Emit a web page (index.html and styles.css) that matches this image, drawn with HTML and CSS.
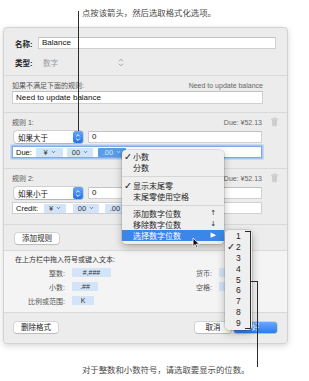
FILE: index.html
```html
<!DOCTYPE html>
<html lang="zh">
<head>
  <meta charset="UTF-8">
  <title>Number format</title>
  <link rel="stylesheet" href="styles.css">
</head>
<body>
  <div class="page">
    <p class="note note-top">点按该箭头，然后选取格式化选项。</p>

    <div class="dialog">
      <div class="sec sec-name">
        <div class="frow">
          <span class="flabel">名称:</span>
          <span class="field field-name">Balance</span>
        </div>
        <div class="frow">
          <span class="flabel">类型:</span>
          <span class="typepop">数字
            <svg width="6" height="9" viewBox="0 0 6 9"><path d="M1 3.2L3 1.2L5 3.2M1 5.8L3 7.8L5 5.8" fill="none" stroke="#9a9a9a" stroke-width=".9"/></svg>
          </span>
        </div>
      </div>

      <div class="sec sec-fail">
        <div class="shead">
          <span>如果不满足下面的规则:</span>
          <span class="preview">Need to update balance</span>
        </div>
        <div class="field field-fail">Need to update balance</div>
      </div>

      <div class="sec rule">
        <div class="shead">
          <span>规则 1:</span>
          <span class="preview">Due: ¥52.13</span>
          <svg class="trash" width="9" height="10" viewBox="0 0 9 10"><path d="M1 2.2h7M3.3 2.2V1.1h2.4v1.1" fill="none" stroke="#c4c4c4" stroke-width=".9"/><path d="M1.8 3l.6 6.2h4.2L7.2 3z" fill="#cdcdcd"/></svg>
        </div>
        <div class="rrow">
          <span class="popup">如果大于
            <span class="stepper"><svg width="6" height="9" viewBox="0 0 6 9"><path d="M1.2 3.4L3 1.6L4.8 3.4M1.2 5.6L3 7.4L4.8 5.6" fill="none" stroke="#fff" stroke-width="1"/></svg></span>
          </span>
          <span class="field val">0</span>
        </div>
        <div class="fmt focus">
          <span class="fname">Due:</span>
          <span class="tok tok-cur">¥<svg width="5" height="4" viewBox="0 0 5 4"><path d="M1 1.2L2.5 2.7L4 1.2" fill="none" stroke="#555" stroke-width=".8"/></svg></span>
          <span class="tok tok-int">00<svg width="5" height="4" viewBox="0 0 5 4"><path d="M1 1.2L2.5 2.7L4 1.2" fill="none" stroke="#555" stroke-width=".8"/></svg></span>
          <span class="tok tok-dec sel">.00<svg width="5" height="4" viewBox="0 0 5 4"><path d="M1 1.2L2.5 2.7L4 1.2" fill="none" stroke="#dbe8fb" stroke-width=".8"/></svg></span>
        </div>
      </div>

      <div class="sec rule">
        <div class="shead">
          <span>规则 2:</span>
          <span class="preview">Due: ¥52.13</span>
          <svg class="trash" width="9" height="10" viewBox="0 0 9 10"><path d="M1 2.2h7M3.3 2.2V1.1h2.4v1.1" fill="none" stroke="#c4c4c4" stroke-width=".9"/><path d="M1.8 3l.6 6.2h4.2L7.2 3z" fill="#cdcdcd"/></svg>
        </div>
        <div class="rrow">
          <span class="popup">如果小于
            <span class="stepper"><svg width="6" height="9" viewBox="0 0 6 9"><path d="M1.2 3.4L3 1.6L4.8 3.4M1.2 5.6L3 7.4L4.8 5.6" fill="none" stroke="#fff" stroke-width="1"/></svg></span>
          </span>
          <span class="field val">0</span>
        </div>
        <div class="fmt">
          <span class="fname">Credit:</span>
          <span class="tok tok-cur">¥<svg width="5" height="4" viewBox="0 0 5 4"><path d="M1 1.2L2.5 2.7L4 1.2" fill="none" stroke="#555" stroke-width=".8"/></svg></span>
          <span class="tok tok-int">00<svg width="5" height="4" viewBox="0 0 5 4"><path d="M1 1.2L2.5 2.7L4 1.2" fill="none" stroke="#555" stroke-width=".8"/></svg></span>
          <span class="tok tok-dec">.00<svg width="5" height="4" viewBox="0 0 5 4"><path d="M1 1.2L2.5 2.7L4 1.2" fill="none" stroke="#555" stroke-width=".8"/></svg></span>
        </div>
      </div>

      <div class="sec sec-add">
        <span class="btn btn-add">添加规则</span>
      </div>

      <div class="sec sec-sym">
        <div class="symhead">在上方栏中拖入符号或键入文本:</div>
        <div class="symgrid">
          <span class="slabel">整数:</span><span><span class="stok stok-int">#,###</span></span>
          <span class="slabel">货币:</span><span><span class="stok stok-r">¥</span></span>
          <span class="slabel">小数:</span><span><span class="stok stok-dec">.##</span></span>
          <span class="slabel">空格:</span><span><span class="stok stok-r">␣</span></span>
          <span class="slabel">比例或范围:</span><span><span class="stok stok-k">K</span></span>
          <span></span><span></span>
        </div>
      </div>

      <div class="sec sec-foot">
        <span class="btn btn-del">删除格式</span>
        <span class="spacer"></span>
        <span class="btn btn-cancel">取消</span>
        <span class="btn btn-ok">好</span>
      </div>
    </div>

    <p class="note note-bottom">对于整数和小数符号，请选取要显示的位数。</p>

    <div class="menu">
      <div class="mi"><span class="chk">✓</span>小数</div>
      <div class="mi">分数</div>
      <div class="msep"></div>
      <div class="mi"><span class="chk">✓</span>显示末尾零</div>
      <div class="mi">末尾零使用空格</div>
      <div class="msep msep-s"></div>
      <div class="mi">添加数字位数<span class="key">↑</span></div>
      <div class="mi">移除数字位数<span class="key">↓</span></div>
      <div class="mi hl">选择数字位数<span class="key">▶</span></div>
    </div>

    <div class="submenu">
      <div class="si">1</div>
      <div class="si"><span class="chk">✓</span>2</div>
      <div class="si">3</div>
      <div class="si">4</div>
      <div class="si">5</div>
      <div class="si">6</div>
      <div class="si">7</div>
      <div class="si">8</div>
      <div class="si">9</div>
    </div>

    <svg class="cursor" width="8" height="12" viewBox="0 0 8 12"><path d="M1 1v8.5l2.1-2 1.4 3.2 1.3-.6-1.4-3.1H7.3z" fill="#111" stroke="#fff" stroke-width=".8"/></svg>

    <div class="ln ln-top"></div>
    <div class="ln ln-brk"></div>
    <div class="ln ln-brk-t"></div>
    <div class="ln ln-brk-b"></div>
    <div class="ln ln-link"></div>
    <div class="ln ln-down"></div>
  </div>
</body>
</html>
```

FILE: styles.css
```css
* {
  box-sizing: border-box;
}

body {
  margin: 0;
  background: #fff;
  font-family: "Liberation Sans", "Noto Sans CJK SC", sans-serif;
  font-size: 7px;
  color: #2a2a2a;
}

.page {
  position: relative;
  width: 309px;
  height: 381px;
  overflow: hidden;
}

.note {
  margin: 0;
  font-family: "Noto Sans CJK SC", sans-serif;
  font-size: 8.4px;
  line-height: 12px;
  color: #4a4a4a;
  white-space: nowrap;
}

.note-top {
  height: 27px;
  padding: 6px 0 0 82px;
}

.note-bottom {
  margin-top: 19px;
  padding-left: 82px;
}

/* dialog */
.dialog {
  margin-left: 3px;
  width: 285px;
  background: #ececec;
  border: 1px solid #d2d2d2;
  border-radius: 4px;
  box-shadow: 0 2px 6px rgba(0, 0, 0, .16);
  overflow: hidden;
}

.sec {
  border-bottom: 1px solid #d9d9d9;
}

.sec-name {
  height: 48px;
  padding: 9px 11px 0 11px;
}

.frow {
  display: flex;
  align-items: center;
  height: 12px;
  margin-bottom: 7px;
}

.flabel {
  width: 23px;
  font-weight: bold;
  font-size: 7.5px;
  color: #222;
}

.field {
  display: block;
  height: 12px;
  padding-left: 3px;
  background: #fff;
  border: 1px solid #d0d0d0;
  border-top-color: #c2c2c2;
  font-size: 8px;
  color: #111;
  line-height: 10px;
}

.field-name {
  flex: 1;
}

.typepop {
  display: flex;
  align-items: center;
  justify-content: space-between;
  width: 88px;
  padding: 0 2px 0 5px;
  color: #9a9a9a;
  font-size: 7.5px;
}

.sec-fail {
  height: 37px;
  padding: 4px 24px 0 8px;
}

.shead {
  display: flex;
  align-items: center;
  height: 10px;
  color: #555;
  font-size: 7px;
}

.preview {
  margin-left: auto;
  color: #666;
  font-size: 7px;
}

.field-fail {
  margin-top: 1px;
  height: 13px;
  line-height: 11px;
}

.rule {
  height: 56px;
  padding: 4px 8px 0 8px;
}

.trash {
  margin-left: 8px;
}

.rrow {
  display: flex;
  align-items: center;
  margin: 4px 17px 0 2px;
  height: 12px;
}

.popup {
  display: flex;
  align-items: center;
  width: 69px;
  height: 12px;
  padding-left: 4px;
  background: #fff;
  border-radius: 2.5px;
  box-shadow: 0 0 0 .5px rgba(0, 0, 0, .22), 0 .5px 1px rgba(0, 0, 0, .15);
  font-size: 7.5px;
  color: #111;
}

.stepper {
  display: flex;
  align-items: center;
  justify-content: center;
  margin-left: auto;
  width: 10px;
  height: 12px;
  border-radius: 2.5px;
  background: linear-gradient(#68a6fa, #2073ec);
}

.val {
  flex: 1;
  margin-left: 5px;
}

.fmt {
  display: flex;
  align-items: center;
  margin: 3px 17px 0 0;
  height: 12px;
  padding-left: 3px;
  background: #fff;
  border: 1px solid #cfcfcf;
  font-size: 7.5px;
  color: #111;
}

.fmt.focus {
  border-color: #7faae6;
  box-shadow: 0 0 0 1.5px #a6c6f0;
}

.fname {
  width: 20px;
}

.tok {
  display: flex;
  align-items: center;
  justify-content: center;
  gap: 3px;
  height: 9px;
  background: #d4e4f8;
  border-radius: 1px;
  color: #333;
}

.tok-cur {
  width: 27px;
}

.tok-int {
  width: 26px;
  margin-left: 4px;
}

.tok-dec {
  width: 28px;
  margin-left: 5px;
}

.tok.sel {
  background: #5b9ae8;
  color: #dce9fb;
}

.rule + .rule .fname {
  width: 28px;
}

.rule + .rule .tok-cur {
  width: 22px;
}

.rule + .rule .tok-int {
  margin-left: 7px;
}

.rule + .rule .tok-dec {
  margin-left: 6px;
}

.sec-add {
  height: 26px;
  padding: 8px 0 0 11px;
}

.btn {
  display: inline-block;
  height: 11px;
  line-height: 11px;
  text-align: center;
  background: #fff;
  border-radius: 2.5px;
  box-shadow: 0 0 0 .5px rgba(0, 0, 0, .2), 0 1px 1px rgba(0, 0, 0, .12);
  font-size: 7.5px;
  color: #222;
}

.btn-add {
  width: 44px;
}

.sec-sym {
  height: 62px;
  padding: 4px 0 0 11px;
  background: #f4f4f4;
}

.symhead {
  height: 10px;
  line-height: 10px;
  color: #333;
  font-size: 7px;
}

.symgrid {
  display: grid;
  grid-template-columns: 57px 117px 30px 1fr;
  grid-auto-rows: 13px;
  row-gap: 1px;
  margin-top: 1px;
  align-items: center;
}

.slabel {
  text-align: right;
  padding-right: 7px;
  color: #555;
  font-size: 7px;
}

.stok {
  display: inline-block;
  height: 9px;
  line-height: 9px;
  text-align: center;
  background: #d4e4f8;
  color: #333;
  font-size: 7px;
}

.stok-int {
  width: 39px;
}

.stok-dec {
  width: 26px;
}

.stok-k {
  width: 22px;
}

.stok-r {
  width: 30px;
}

.sec-foot {
  display: flex;
  height: 30px;
  padding: 9px 10px 0 10px;
  border-bottom: 0;
  background: #ececec;
}

.btn-del {
  width: 44px;
}

.spacer {
  flex: 1;
}

.btn-cancel {
  width: 36px;
}

.btn-ok {
  width: 43px;
  margin-left: 3px;
  background: linear-gradient(#6aa8fb, #2a7cf0);
  color: #fff;
}

/* popup menu */
.menu {
  position: absolute;
  left: 122px;
  top: 150px;
  width: 102px;
  padding: 1px 0 3px;
  background: #efefef;
  border-radius: 4px;
  box-shadow: 0 0 0 .5px rgba(0, 0, 0, .18), 0 3px 9px rgba(0, 0, 0, .28);
  font-family: "Noto Sans CJK SC", sans-serif;
}

.mi {
  position: relative;
  display: flex;
  height: 11px;
  line-height: 11px;
  padding: 0 8px 0 11px;
  font-size: 8px;
  color: #1e1e1e;
}

.chk {
  position: absolute;
  left: 2px;
  font-family: "DejaVu Sans", sans-serif;
  font-size: 9.5px;
}

.key {
  margin-left: auto;
  font-family: "DejaVu Sans", sans-serif;
  font-size: 7px;
}

.mi.hl {
  background: #3b86e6;
  color: #fff;
}

.msep {
  height: 7px;
  position: relative;
}

.msep::after {
  content: "";
  position: absolute;
  left: 0;
  right: 0;
  top: 3px;
  height: 1px;
  background: #d6d6d6;
}

.msep-s {
  height: 6px;
}

.submenu {
  position: absolute;
  left: 225px;
  top: 230px;
  width: 27px;
  height: 100px;
  padding-top: 1px;
  background: #efefef;
  border-radius: 4px;
  box-shadow: 0 0 0 .5px rgba(0, 0, 0, .18), 0 3px 9px rgba(0, 0, 0, .28);
}

.si {
  position: relative;
  height: 10.9px;
  line-height: 10.9px;
  padding-left: 11px;
  font-size: 8.5px;
  color: #1e1e1e;
}

.cursor {
  position: absolute;
  left: 192px;
  top: 237px;
}

/* callout lines */
.ln {
  position: absolute;
  background: #2b2b2b;
}

.ln-top {
  left: 78px;
  top: 11px;
  width: 1px;
  height: 120px;
}

.ln-brk {
  left: 250px;
  top: 231px;
  width: 1px;
  height: 98px;
}

.ln-brk-t {
  left: 245px;
  top: 231px;
  width: 6px;
  height: 1px;
}

.ln-brk-b {
  left: 245px;
  top: 328px;
  width: 6px;
  height: 1px;
}

.ln-link {
  left: 250px;
  top: 281px;
  width: 8px;
  height: 1px;
}

.ln-down {
  left: 257px;
  top: 281px;
  width: 1px;
  height: 86px;
}
```
